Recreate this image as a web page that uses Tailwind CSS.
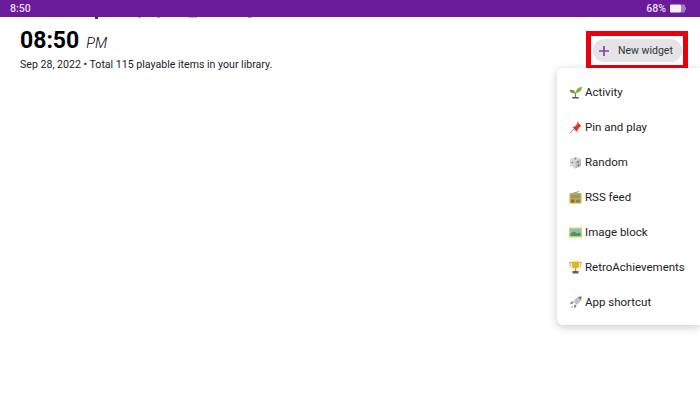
<!DOCTYPE html>
<html lang="en">
  <head>
    <meta charset="UTF-8" />
    <title>New widget</title>
    <script src="https://cdn.jsdelivr.net/npm/@tailwindcss/browser@4"></script>
  </head>
  <body class="bg-white text-black font-['Roboto',sans-serif] overflow-hidden">
    <div class="relative w-[700px] h-[400px] overflow-hidden">
      <!-- Status bar -->
      <div class="h-[17px] bg-[#6a1b9a] text-[#eadcf0] text-[10.5px] font-medium flex items-center justify-between pl-[10px] pr-[13px]">
        <span>8:50</span>
        <div class="flex items-center gap-[4px]">
          <span>68%</span>
          <svg width="17" height="9" viewBox="0 0 17 9">
            <rect x="0" y="0.5" width="11" height="8" rx="1" fill="#f4eef7" />
            <path d="M11 0.5h3a1 1 0 0 1 1 1v1.500h1v3h-1v1.500a1 1 0 0 1-1 1h-3z" fill="#a57cc0" />
          </svg>
        </div>
      </div>

      <!-- Bits of the scrolled line under the status bar -->
      <div class="h-[2px] flex items-start">
        <span class="ml-[95px] w-[3px] h-[2px] bg-[#333]"></span>
        <span class="ml-[40px] w-[3px] h-[1px] bg-[#aaa]"></span>
        <span class="ml-[16px] w-[3px] h-[1px] bg-[#aaa]"></span>
        <span class="ml-[28px] w-[9px] h-[1px] bg-[#bbb]"></span>
        <span class="ml-[51px] w-[4px] h-[1px] bg-[#aaa]"></span>
      </div>

      <!-- Header -->
      <div class="flex justify-between items-start">
        <div class="pl-[20px] pt-[8px]">
          <div class="flex items-baseline gap-[7px] leading-[27px]">
            <span class="text-[23px] font-bold">08:50</span>
            <span class="text-[14.500px] italic font-light">PM</span>
          </div>
          <p class="text-[10.600px] leading-[14px] mt-[1px] text-[#222]">Sep 28, 2022 • Total 115 playable items in your library.</p>
        </div>
        <button class="mt-[20px] mr-[18px] w-[89px] h-[23px] rounded-full bg-[#e4e3e6] flex items-center pl-[5px] text-[10.5px] text-[#333]">
          <svg class="mr-[8px]" width="12" height="12" viewBox="0 0 12 12">
            <path d="M6 1v10M1 6h10" stroke="#8e3fa8" stroke-width="1.700" />
          </svg>
          New widget
        </button>
      </div>

      <!-- Red annotation -->
      <div class="absolute left-[586px] top-[31px] w-[102px] h-[39px] border-[5px] border-[#e8000d]"></div>

      <!-- Widget menu -->
      <ul class="absolute left-[557px] top-[68px] w-[143px] h-[257px] pt-[7px] bg-white rounded-l-[6px] shadow-[0_2px_8px_rgba(0,0,0,0.22)] text-[11.500px] text-[#222]">
        <li class="h-[35px] flex items-center pl-[12px] gap-[3px]">
          <svg width="13" height="13" viewBox="0 0 13 13">
            <path d="M6.500 12V7" stroke="#5b8a3a" stroke-width="1.200" />
            <path d="M6.500 7C6 4 3 3.500 0.500 4c.5 2.500 3 4 6 3z" fill="#6a9f3c" />
            <path d="M6.500 7C7 3 10 1 13 1c0 3-2.500 6-6.500 6z" fill="#7cb342" />
            <rect x="3" y="11" width="7" height="1.500" rx="0.700" fill="#6d4c41" />
          </svg>
          <span>Activity</span>
        </li>
        <li class="h-[35px] flex items-center pl-[12px] gap-[3px]">
          <svg width="13" height="13" viewBox="0 0 13 13">
            <path d="M8 0.500l4.500 4.500-1.500.7-2.500 3.300-.2 2-2-1.500-1.500-2L3.500 6l2-.2 2.800-2.800z" fill="#e2332e" />
            <path d="M5 8L0.500 12.500" stroke="#9e9e9e" stroke-width="1" />
          </svg>
          <span>Pin and play</span>
        </li>
        <li class="h-[35px] flex items-center pl-[12px] gap-[3px]">
          <svg width="13" height="13" viewBox="0 0 13 13">
            <path d="M6.500 0.500L12 3v7l-5.500 2.500L1 10V3z" fill="#d9d9dc" />
            <path d="M6.500 5.500L12 3v7l-5.500 2.500z" fill="#b9b9be" />
            <circle cx="6.500" cy="2.800" r="0.800" fill="#8a4a5a" />
            <circle cx="3.500" cy="6.500" r="0.800" fill="#c0394b" />
            <circle cx="9" cy="6" r="0.700" fill="#444" />
            <circle cx="9.500" cy="9.500" r="0.700" fill="#444" />
          </svg>
          <span>Random</span>
        </li>
        <li class="h-[35px] flex items-center pl-[12px] gap-[3px]">
          <svg width="13" height="13" viewBox="0 0 13 13">
            <path d="M2 3L10 0.500" stroke="#8d6e3f" stroke-width="0.800" />
            <rect x="0.500" y="2" width="12" height="10.500" rx="1" fill="#d8a43c" />
            <rect x="2" y="3.500" width="9" height="3.500" fill="#7fa07a" />
            <rect x="2" y="8.500" width="3.500" height="3" fill="#8a6a34" />
            <rect x="7" y="8.500" width="4" height="3" fill="#6f8f6c" />
          </svg>
          <span>RSS feed</span>
        </li>
        <li class="h-[35px] flex items-center pl-[12px] gap-[3px]">
          <svg width="13" height="13" viewBox="0 0 13 13">
            <rect x="0" y="1.500" width="13" height="10" fill="#e9c75a" />
            <rect x="1.500" y="3" width="10" height="7" fill="#7fc4b8" />
            <path d="M1.500 10V7.500L5 5.500l3 2 3.500-1V10z" fill="#3f9a6b" />
          </svg>
          <span>Image block</span>
        </li>
        <li class="h-[35px] flex items-center pl-[12px] gap-[3px]">
          <svg width="13" height="13" viewBox="0 0 13 13">
            <path d="M3 1.500H0.800c0 3 1.200 4.500 3.200 4.800M10 1.500h2.200c0 3-1.200 4.500-3.200 4.800" fill="none" stroke="#c99a2e" stroke-width="1" />
            <path d="M3 0.500h7v3c0 2.500-1.500 4-3.500 4S3 6 3 3.500z" fill="#e6b422" />
            <rect x="5.800" y="7" width="1.400" height="3" fill="#c99a2e" />
            <rect x="3.500" y="10" width="6" height="2.500" fill="#7a5a3a" />
          </svg>
          <span>RetroAchievements</span>
        </li>
        <li class="h-[35px] flex items-center pl-[12px] gap-[3px]">
          <svg width="13" height="13" viewBox="0 0 13 13">
            <path d="M12.500 0.500c-3.500 0-6 1.500-8 5l3 3c3.500-2 5-4.500 5-8z" fill="#b8c4d0" />
            <path d="M12.500 0.500c-1.300 0-2.500.2-3.500.6L11.900 4c.4-1 .6-2.200.6-3.500z" fill="#d9453a" />
            <path d="M4.500 5.500L2 6l-1 2 3-.5zM7.500 8.500L7 11l-2 1 .5-3z" fill="#5c7fa8" />
            <path d="M3.500 9.500L1 12.500l3-1.500z" fill="#e8912d" />
          </svg>
          <span>App shortcut</span>
        </li>
      </ul>
    </div>
  </body>
</html>
